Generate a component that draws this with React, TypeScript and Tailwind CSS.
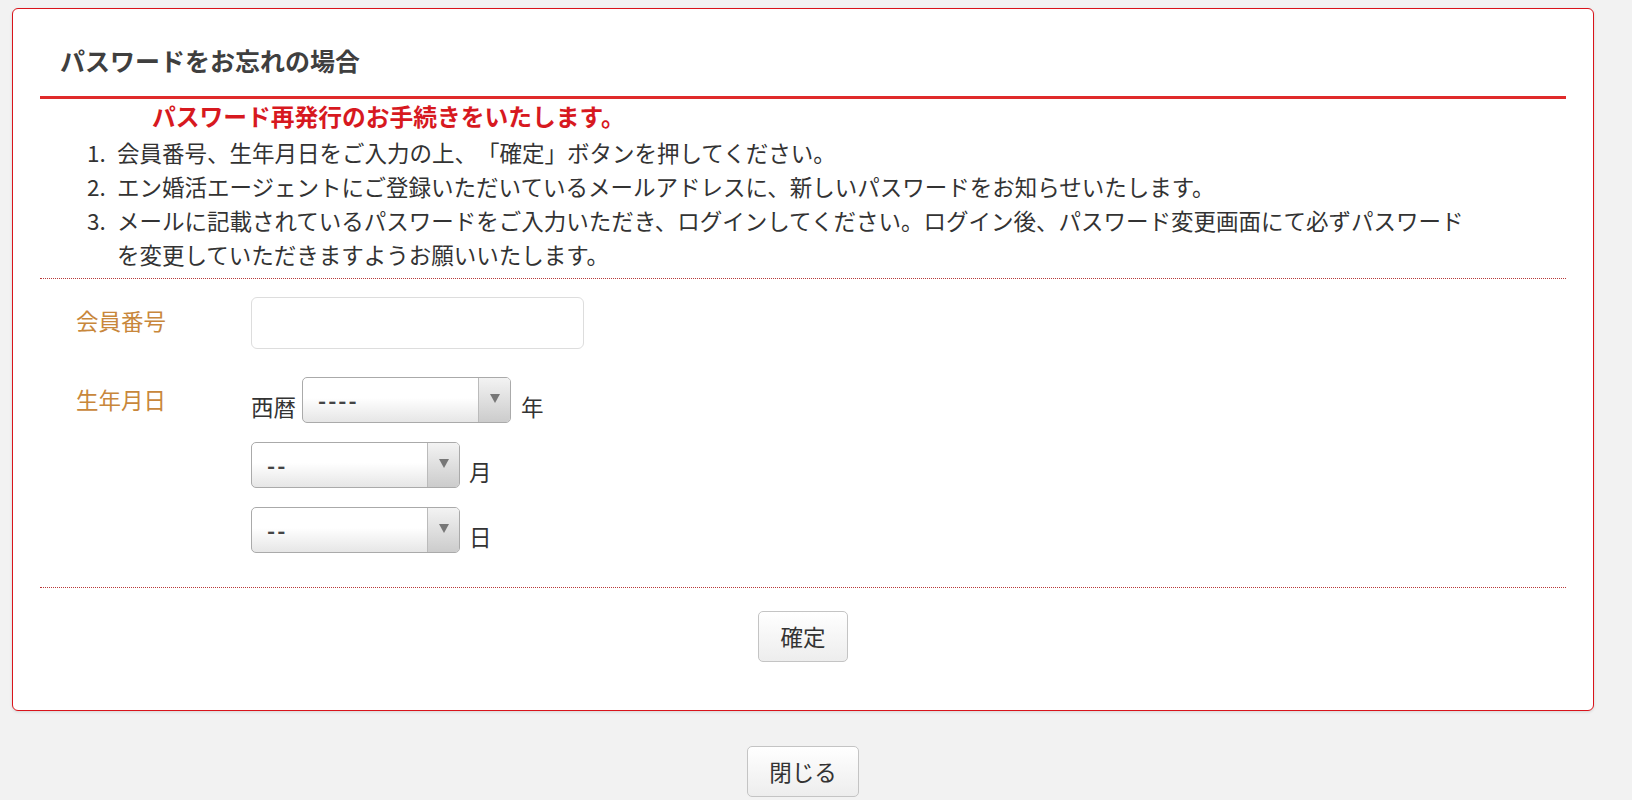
import React from 'react';

const FONT = "font-['Noto_Sans_CJK_JP','Noto_Sans',sans-serif]";

const steps: React.ReactNode[] = [
    '会員番号、生年月日をご入力の上、「確定」ボタンを押してください。',
    'エン婚活エージェントにご登録いただいているメールアドレスに、新しいパスワードをお知らせいたします。',
    <>
        メールに記載されているパスワードをご入力いただき、ログインしてください。ログイン後、パスワード変更画面にて必ずパスワード
        <br />
        を変更していただきますようお願いいたします。
    </>,
];

const FakeSelect: React.FC<{ value: string }> = ({ value }) => (
    <div className="flex h-[46px] w-[209px] shrink-0 overflow-hidden rounded-[5px] border border-[#aaaaaa] bg-linear-to-b from-white from-45% to-[#e6e6e6]">
        <div className="flex flex-1 items-center pl-[15px] pb-[3px] text-[22px] font-semibold leading-none tracking-[2px] text-[#444]">
            {value}
        </div>
        <div className="flex w-[32px] items-center justify-center border-l border-[#bbbbbb] bg-linear-to-b from-[#f3f3f3] to-[#cccccc] pb-[3px]">
            <svg width="10" height="9" viewBox="0 0 10 9">
                <path d="M0 0h10L5 9z" fill="#777" />
            </svg>
        </div>
    </div>
);

const Button: React.FC<{ label: string }> = ({ label }) => (
    <button className="flex h-[51px] items-center rounded-[5px] border border-[#c4c4c4] bg-linear-to-b from-white to-[#ededed] px-[21px] text-[22.5px] leading-none text-[#333]">
        {label}
    </button>
);

export default function App() {
    return (
        <div className={`min-h-screen bg-[#f2f2f2] pt-[8px] text-[#333] [text-spacing-trim:space-all] ${FONT}`}>
            {/* Card */}
            <div className="ml-[12px] w-[1582px] rounded-[6px] border border-[#d9141b] bg-white px-[27px] shadow-[0_1px_3px_rgba(0,0,0,0.12)]">
                <h1 className="border-b-[3px] border-[#e02a2a] pt-[33px] pb-[18px] pl-[20px] text-[25px] font-bold leading-[36px] text-[#3f3f3f]">
                    パスワードをお忘れの場合
                </h1>

                <p className="pl-[112px] text-[23.75px] font-bold leading-[33px] text-[#d7191f]">
                    パスワード再発行のお手続きをいたします。
                </p>

                <ol className="mt-[3px] border-b border-dotted border-[#b83a3a] pb-[7px] text-[22.5px] leading-[34px]">
                    {steps.map((s, i) => (
                        <li key={i} className="flex">
                            <span className="ml-[47px] w-[30px] shrink-0">{i + 1}.</span>
                            <span>{s}</span>
                        </li>
                    ))}
                </ol>

                {/* Form */}
                <div className="flex flex-col border-b border-dotted border-[#b83a3a] pt-[18px] pb-[34px] pl-[36px] text-[22.5px]">
                    <div className="flex">
                        <div className="mt-[6px] w-[175px] shrink-0 leading-[34px] text-[#c8873b]">会員番号</div>
                        <div className="h-[52px] w-[333px] rounded-[6px] border border-[#dddddd] bg-white" />
                    </div>

                    <div className="mt-[28px] flex">
                        <div className="mt-[5px] w-[175px] shrink-0 leading-[34px] text-[#c8873b]">生年月日</div>
                        <div className="flex flex-col gap-[19px]">
                            <div className="flex items-end">
                                <span className="mr-[6px] leading-[34px]">西暦</span>
                                <FakeSelect value="----" />
                                <span className="ml-[10px] leading-[34px]">年</span>
                            </div>
                            <div className="flex items-end">
                                <FakeSelect value="--" />
                                <span className="ml-[9px] leading-[34px]">月</span>
                            </div>
                            <div className="flex items-end">
                                <FakeSelect value="--" />
                                <span className="ml-[9px] leading-[34px]">日</span>
                            </div>
                        </div>
                    </div>
                </div>

                <div className="flex justify-center pt-[23px] pb-[48px]">
                    <Button label="確定" />
                </div>
            </div>

            {/* Close */}
            <div className="ml-[12px] flex w-[1582px] justify-center pt-[35px]">
                <Button label="閉じる" />
            </div>
        </div>
    );
}
